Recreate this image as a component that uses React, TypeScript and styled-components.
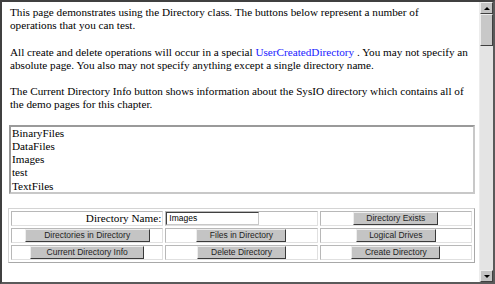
import React, { FC } from "react";
import styled, { createGlobalStyle } from "styled-components";

const GlobalStyle = createGlobalStyle`
  html, body {
    margin: 0;
    padding: 0;
    background: #ffffff;
  }
`;

const directories = ["BinaryFiles", "DataFiles", "Images", "test", "TextFiles"];

interface IButtonSpec {
  label: string;
  width: number;
}

const rows: IButtonSpec[][] = [
  [
    { label: "Directories in Directory", width: 125 },
    { label: "Files in Directory", width: 90 },
    { label: "Logical Drives", width: 80 },
  ],
  [
    { label: "Current Directory Info", width: 114 },
    { label: "Delete Directory", width: 89 },
    { label: "Create Directory", width: 89 },
  ],
];

const App: FC = () => {
  return (
    <>
      <GlobalStyle />
      <Frame>
        <Page>
          <Para $width={450}>
            This page demonstrates using the Directory class. The buttons below
            represent a number of operations that you can test.
          </Para>
          <Para $width={470}>
            All create and delete operations will occur in a special{" "}
            <Link>UserCreatedDirectory</Link> . You may not specify an absolute
            page. You also may not specify anything except a single directory
            name.
          </Para>
          <Para $width={470}>
            The Current Directory Info button shows information about the SysIO
            directory which contains all of the demo pages for this chapter.
          </Para>

          <ListBox>
            {directories.map((d) => (
              <ListItem key={d}>{d}</ListItem>
            ))}
          </ListBox>

          <Grid>
            <tbody>
              <tr>
                <Cell $align="right">
                  <Label>Directory Name:</Label>
                </Cell>
                <Cell $align="left">
                  <NameInput defaultValue="Images" />
                </Cell>
                <Cell>
                  <Button $width={85}>Directory Exists</Button>
                </Cell>
              </tr>
              {rows.map((row, i) => (
                <tr key={i}>
                  {row.map((b) => (
                    <Cell key={b.label}>
                      <Button $width={b.width}>{b.label}</Button>
                    </Cell>
                  ))}
                </tr>
              ))}
            </tbody>
          </Grid>
        </Page>

        <ScrollBar>
          <ArrowButton>
            <ArrowUp />
          </ArrowButton>
          <Thumb />
          <Track />
          <ArrowButton>
            <ArrowDown />
          </ArrowButton>
        </ScrollBar>
      </Frame>
    </>
  );
};

export default App;

const Frame = styled.div`
  width: 495px;
  height: 284px;
  box-sizing: border-box;
  border: 2px solid;
  border-color: #404040 #5a5a5a #5a5a5a #404040;
  display: flex;
  overflow: hidden;
  background: #ffffff;
`;

const Page = styled.div`
  flex: 1;
  min-width: 0;
  padding: 4px 0 0 8px;
  font-family: "Liberation Serif", "Times New Roman", serif;
  font-size: 11.2px;
  line-height: 13.3px;
  color: #000000;
  overflow: hidden;
`;

const Para = styled.p<{ $width: number }>`
  margin: 0 0 13px 0;
  width: ${(props) => props.$width}px;
`;

const Link = styled.span`
  color: #1a1aff;
`;

const ListBox = styled.div`
  width: 466px;
  height: 69px;
  box-sizing: border-box;
  margin-left: -1px;
  border: 2px solid;
  border-color: #9a9a9a #c8c8c8 #c8c8c8 #9a9a9a;
  padding: 0 1px;
  overflow: hidden;
`;

const ListItem = styled.div`
  height: 13.2px;
  line-height: 13.2px;
  white-space: nowrap;
`;

const Grid = styled.table`
  width: 467px;
  margin: 14px 0 0 -2px;
  table-layout: fixed;
  border-collapse: separate;
  border-spacing: 2px;
  border: 1px solid;
  border-color: #d4d4d4 #a8a8a8 #a8a8a8 #d4d4d4;
`;

const Cell = styled.td<{ $align?: string }>`
  height: 15px;
  box-sizing: border-box;
  padding: 0;
  border: 1px solid;
  border-color: #b8b8b8 #e0e0e0 #e0e0e0 #b8b8b8;
  text-align: ${(props) => props.$align || "center"};
  vertical-align: middle;
  line-height: 13px;
  font-family: "Liberation Serif", "Times New Roman", serif;
  font-size: 11.2px;
`;

const Label = styled.span`
  display: block;
  padding-right: 1px;
`;

const NameInput = styled.input`
  display: block;
  width: 93px;
  height: 13px;
  box-sizing: border-box;
  margin: 0;
  padding: 0 2px;
  border: 1px solid;
  border-color: #404040 #c8c8c8 #c8c8c8 #404040;
  font-family: "Liberation Sans", Arial, sans-serif;
  font-size: 8.5px;
  color: #000000;
  outline: none;
`;

const Button = styled.button<{ $width: number }>`
  display: block;
  width: ${(props) => props.$width}px;
  height: 13px;
  box-sizing: border-box;
  margin: 0 auto;
  padding: 0;
  background: #c4c4c4;
  border: 1px solid;
  border-color: #eeeeee #3a3a3a #3a3a3a #eeeeee;
  font-family: "Liberation Sans", Arial, sans-serif;
  font-size: 8.5px;
  line-height: 11px;
  color: #1e1e1e;
  cursor: pointer;
`;

const ScrollBar = styled.div`
  width: 13px;
  flex-shrink: 0;
  display: flex;
  flex-direction: column;
  background: #e4e4e4;
  border-left: 1px solid #ececec;
`;

const ArrowButton = styled.div`
  height: 12px;
  box-sizing: border-box;
  background: #c4c4c4;
  border: 1px solid;
  border-color: #eeeeee #404040 #404040 #eeeeee;
  display: flex;
  align-items: center;
  justify-content: center;
`;

const ArrowUp = styled.div`
  width: 0;
  height: 0;
  border-left: 3px solid transparent;
  border-right: 3px solid transparent;
  border-bottom: 3px solid #000000;
`;

const ArrowDown = styled.div`
  width: 0;
  height: 0;
  border-left: 3px solid transparent;
  border-right: 3px solid transparent;
  border-top: 3px solid #000000;
`;

const Thumb = styled.div`
  height: 32px;
  box-sizing: border-box;
  background: #c8c8c8;
  border: 1px solid;
  border-color: #eeeeee #404040 #404040 #eeeeee;
`;

const Track = styled.div`
  flex: 1;
`;
